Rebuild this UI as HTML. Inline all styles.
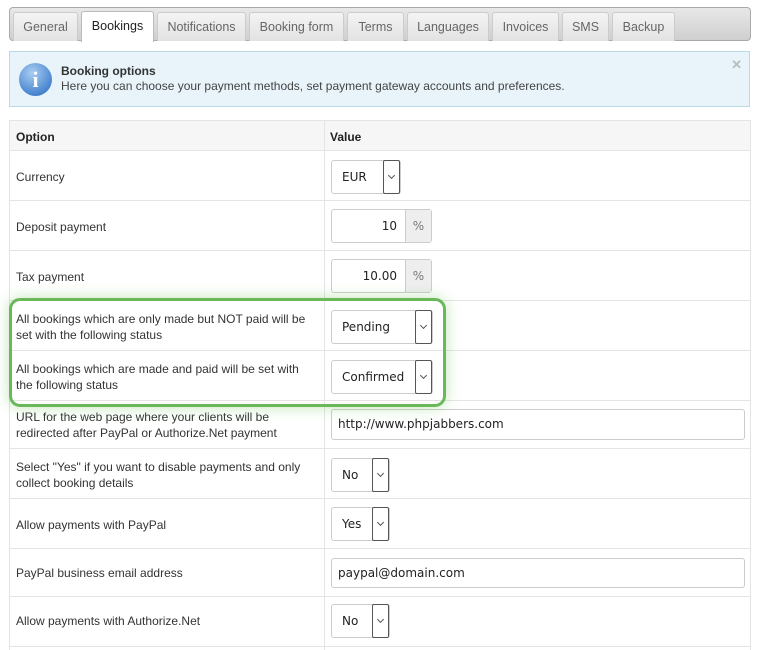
<!DOCTYPE html>
<html><head><style>
*{box-sizing:border-box;margin:0;padding:0}
body{width:760px;height:640px;overflow:hidden;background:#fff;font-family:"Liberation Sans",Arial,sans-serif;font-size:12px;color:#333;position:relative}
.tabs{position:absolute;left:9px;top:7px;width:742px;height:34px;border:1px solid #aaa;border-radius:4px;background:linear-gradient(#e8e8e8,#cfcfcf)}
.tab{position:absolute;top:4px;height:29px;border:1px solid #ccc;border-bottom:none;border-radius:3px 3px 0 0;background:linear-gradient(#f4f4f4,#e2e2e2);color:#666;font-size:12.5px;line-height:28px;text-align:center}
.tab.on{background:#fff;color:#222;top:3px;height:31px;border-color:#bbb}
.info{position:absolute;left:9px;top:51px;width:741px;height:56px;background:#e8f4fa;border:1px solid #b8dbe8}
.info .ic{position:absolute;left:9px;top:11px;width:33px;height:33px;border-radius:50%;background:radial-gradient(circle at 40% 30%,#a9cdf2,#4a86d0 70%,#3a6fb8);color:#fff;font:bold 22px "Liberation Serif",serif;text-align:center;line-height:33px}
.info b{position:absolute;left:51px;top:12px;font-size:12px;color:#333}
.info span{position:absolute;left:51px;top:27px;font-size:12px;color:#444}
.info .x{position:absolute;right:7px;top:5px;color:#bbb;font-size:13px;font-weight:bold}
.tbl{position:absolute;left:9px;top:120px;width:742px;height:530px;border:1px solid #e4e4e4;border-bottom:none}
.row{position:absolute;left:0;width:740px;border-bottom:1px solid #e4e4e4}
.row .l{position:absolute;left:6px;width:300px;line-height:16px}
.vd{position:absolute;left:314px;top:0;bottom:0;border-left:1px solid #e4e4e4}
.hd{background:#f6f6f6;font-weight:bold;color:#222}
.ctl{position:absolute;left:321px;height:34px;border:1px solid #ccc;border-radius:3px;background:#fff;font-family:"DejaVu Sans",Verdana,sans-serif;font-size:12px;color:#222;line-height:32px;padding-left:10px}
.dd{position:absolute;right:0;top:-1px;width:17px;height:34px;border:1px solid #555;border-radius:2px;background:#fff}
.dd:after{content:"";position:absolute;left:5px;top:12px;width:4px;height:4px;border-right:1px solid #555;border-bottom:1px solid #555;transform:rotate(45deg)}
.pct{position:absolute;right:0;top:0;width:26px;height:32px;background:#eee;border-left:1px solid #ccc;color:#777;text-align:center;padding:0;font-size:12px}
.hl{position:absolute;left:9px;top:298px;width:437px;height:109px;border:3px solid #6ab85a;border-radius:11px;box-shadow:0 0 14px rgba(120,200,100,.45)}
</style></head><body>
<div class="tabs">
<div class="tab" style="left:3px;width:65px">General</div>
<div class="tab on" style="left:71px;width:73px">Bookings</div>
<div class="tab" style="left:147px;width:89px">Notifications</div>
<div class="tab" style="left:239px;width:95px">Booking form</div>
<div class="tab" style="left:337px;width:57px">Terms</div>
<div class="tab" style="left:397px;width:82px">Languages</div>
<div class="tab" style="left:482px;width:67px">Invoices</div>
<div class="tab" style="left:552px;width:47px">SMS</div>
<div class="tab" style="left:602px;width:63px">Backup</div>
</div>
<div class="info"><div class="ic">i</div><b>Booking options</b><span>Here you can choose your payment methods, set payment gateway accounts and preferences.</span><div class="x">✕</div></div>
<div class="tbl">
<div class="row hd" style="top:0;height:30px"><div class="l" style="top:8px">Option</div><div class="l" style="left:320px;top:8px">Value</div></div>
<div class="row" style="top:30px;height:50px"><div class="l" style="top:18px">Currency</div><div class="ctl" style="top:9px;width:70px">EUR<div class="dd"></div></div></div>
<div class="row" style="top:80px;height:50px"><div class="l" style="top:18px">Deposit payment</div><div class="ctl" style="top:8px;width:101px;padding:0"><span style="position:absolute;right:34px">10</span><div class="pct">%</div></div></div>
<div class="row" style="top:130px;height:50px"><div class="l" style="top:18px">Tax payment</div><div class="ctl" style="top:8px;width:101px;padding:0"><span style="position:absolute;right:34px">10.00</span><div class="pct">%</div></div></div>
<div class="row" style="top:180px;height:50px"><div class="l" style="top:10px">All bookings which are only made but NOT paid will be set with the following status</div><div class="ctl" style="top:9px;width:102px">Pending<div class="dd"></div></div></div>
<div class="row" style="top:230px;height:50px"><div class="l" style="top:10px">All bookings which are made and paid will be set with the following status</div><div class="ctl" style="top:9px;width:102px">Confirmed<div class="dd"></div></div></div>
<div class="row" style="top:280px;height:48px"><div class="l" style="top:8px">URL for the web page where your clients will be redirected after PayPal or Authorize.Net payment</div><div class="ctl" style="top:8px;width:414px;height:31px;line-height:29px;padding-left:6px">http://www.phpjabbers.com</div></div>
<div class="row" style="top:328px;height:50px"><div class="l" style="top:10px">Select "Yes" if you want to disable payments and only collect booking details</div><div class="ctl" style="top:9px;width:59px">No<div class="dd"></div></div></div>
<div class="row" style="top:378px;height:50px"><div class="l" style="top:18px">Allow payments with PayPal</div><div class="ctl" style="top:8px;width:59px">Yes<div class="dd"></div></div></div>
<div class="row" style="top:428px;height:48px"><div class="l" style="top:16px">PayPal business email address</div><div class="ctl" style="top:9px;width:414px;height:30px;line-height:28px;padding-left:6px">paypal@domain.com</div></div>
<div class="row" style="top:476px;height:50px"><div class="l" style="top:16px">Allow payments with Authorize.Net</div><div class="ctl" style="top:7px;width:59px">No<div class="dd"></div></div></div>
<div class="vd"></div>
</div>
<div class="hl"></div>
</body></html>
